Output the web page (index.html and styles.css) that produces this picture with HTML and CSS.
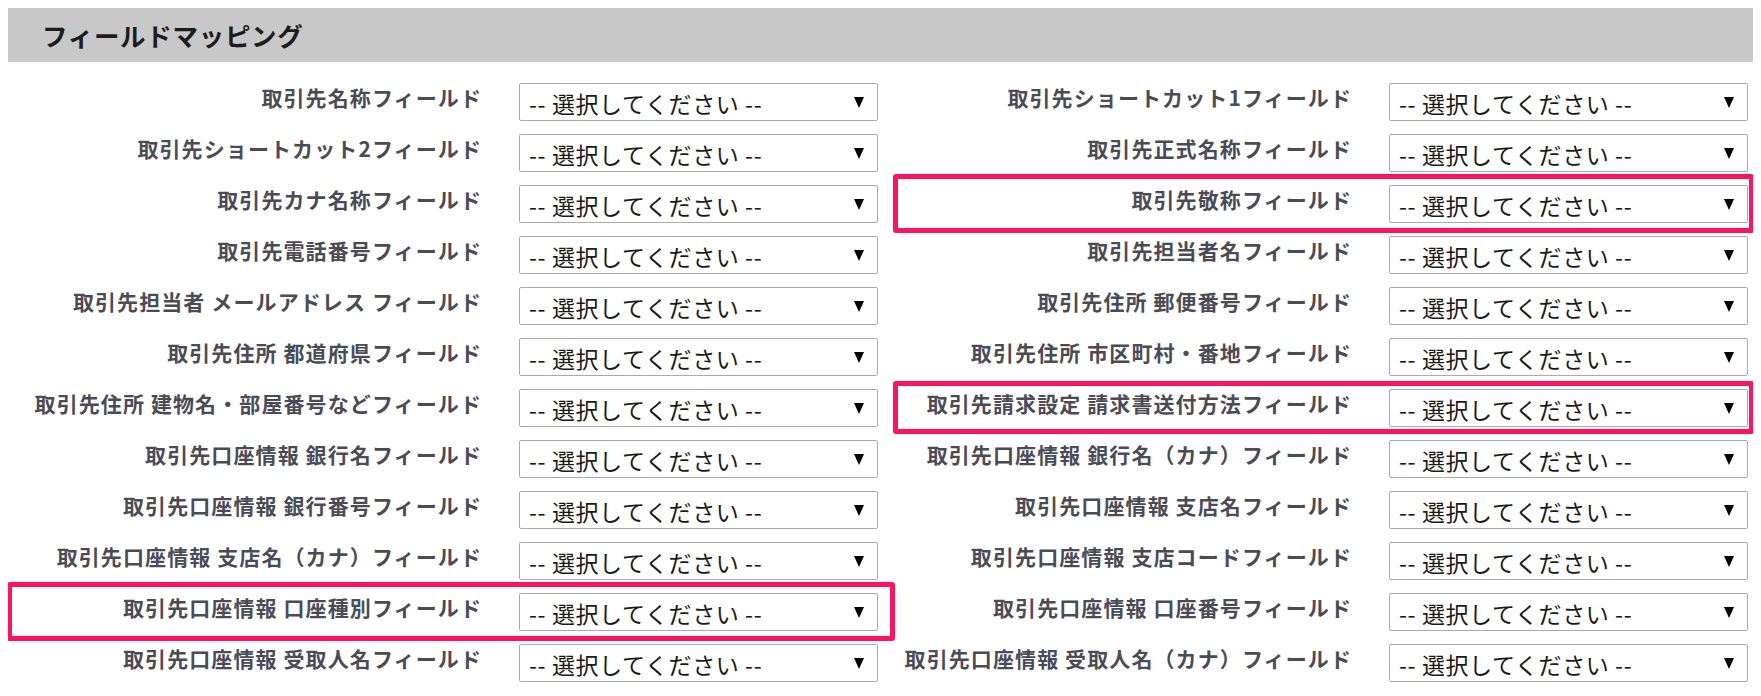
FILE: index.html
```html
<!DOCTYPE html>
<html lang="ja">
<head>
<meta charset="utf-8">
<title>フィールドマッピング</title>
<link rel="stylesheet" href="styles.css">
</head>
<body>
<section class="mapping">
  <h2 class="mapping-title">フィールドマッピング</h2>
  <div class="mapping-grid">
    <div class="field"><label class="field-label">取引先名称フィールド</label><div class="picker"><select class="picker-select"><option>-- 選択してください --</option></select></div></div>
    <div class="field"><label class="field-label">取引先ショートカット1フィールド</label><div class="picker"><select class="picker-select"><option>-- 選択してください --</option></select></div></div>

    <div class="field"><label class="field-label">取引先ショートカット2フィールド</label><div class="picker"><select class="picker-select"><option>-- 選択してください --</option></select></div></div>
    <div class="field"><label class="field-label">取引先正式名称フィールド</label><div class="picker"><select class="picker-select"><option>-- 選択してください --</option></select></div></div>

    <div class="field"><label class="field-label">取引先カナ名称フィールド</label><div class="picker"><select class="picker-select"><option>-- 選択してください --</option></select></div></div>
    <div class="field hl hl-right"><label class="field-label">取引先敬称フィールド</label><div class="picker"><select class="picker-select"><option>-- 選択してください --</option></select></div></div>

    <div class="field"><label class="field-label">取引先電話番号フィールド</label><div class="picker"><select class="picker-select"><option>-- 選択してください --</option></select></div></div>
    <div class="field"><label class="field-label">取引先担当者名フィールド</label><div class="picker"><select class="picker-select"><option>-- 選択してください --</option></select></div></div>

    <div class="field"><label class="field-label">取引先担当者 メールアドレス フィールド</label><div class="picker"><select class="picker-select"><option>-- 選択してください --</option></select></div></div>
    <div class="field"><label class="field-label">取引先住所 郵便番号フィールド</label><div class="picker"><select class="picker-select"><option>-- 選択してください --</option></select></div></div>

    <div class="field"><label class="field-label">取引先住所 都道府県フィールド</label><div class="picker"><select class="picker-select"><option>-- 選択してください --</option></select></div></div>
    <div class="field"><label class="field-label">取引先住所 市区町村・番地フィールド</label><div class="picker"><select class="picker-select"><option>-- 選択してください --</option></select></div></div>

    <div class="field"><label class="field-label">取引先住所 建物名・部屋番号などフィールド</label><div class="picker"><select class="picker-select"><option>-- 選択してください --</option></select></div></div>
    <div class="field hl hl-right hl-tight"><label class="field-label">取引先請求設定 請求書送付方法フィールド</label><div class="picker"><select class="picker-select"><option>-- 選択してください --</option></select></div></div>

    <div class="field"><label class="field-label">取引先口座情報 銀行名フィールド</label><div class="picker"><select class="picker-select"><option>-- 選択してください --</option></select></div></div>
    <div class="field"><label class="field-label">取引先口座情報 銀行名（カナ）フィールド</label><div class="picker"><select class="picker-select"><option>-- 選択してください --</option></select></div></div>

    <div class="field"><label class="field-label">取引先口座情報 銀行番号フィールド</label><div class="picker"><select class="picker-select"><option>-- 選択してください --</option></select></div></div>
    <div class="field"><label class="field-label">取引先口座情報 支店名フィールド</label><div class="picker"><select class="picker-select"><option>-- 選択してください --</option></select></div></div>

    <div class="field"><label class="field-label">取引先口座情報 支店名（カナ）フィールド</label><div class="picker"><select class="picker-select"><option>-- 選択してください --</option></select></div></div>
    <div class="field"><label class="field-label">取引先口座情報 支店コードフィールド</label><div class="picker"><select class="picker-select"><option>-- 選択してください --</option></select></div></div>

    <div class="field hl hl-left"><label class="field-label">取引先口座情報 口座種別フィールド</label><div class="picker"><select class="picker-select"><option>-- 選択してください --</option></select></div></div>
    <div class="field"><label class="field-label">取引先口座情報 口座番号フィールド</label><div class="picker"><select class="picker-select"><option>-- 選択してください --</option></select></div></div>

    <div class="field"><label class="field-label">取引先口座情報 受取人名フィールド</label><div class="picker"><select class="picker-select"><option>-- 選択してください --</option></select></div></div>
    <div class="field"><label class="field-label">取引先口座情報 受取人名（カナ）フィールド</label><div class="picker"><select class="picker-select"><option>-- 選択してください --</option></select></div></div>
  </div>
</section>
</body>
</html>
```

FILE: styles.css
```css
html, body {
  background: #ffffff;
}

body {
  margin: 8px;
  font-family: "Noto Sans CJK JP", "Noto Sans", sans-serif;
  color: #222222;
  overflow: hidden;
}

.mapping {
  width: 1740px;
}

.mapping-title {
  margin: 0 -13px 0 0;
  height: 54px;
  box-sizing: border-box;
  padding: 0 0 1px 34px;
  display: flex;
  align-items: center;
  background: #c8c8c8;
  font-size: 25.5px;
  font-weight: 700;
  letter-spacing: 0.7px;
  color: #1c1c1c;
  line-height: 1;
}

.mapping-grid {
  margin-top: 21px;
  display: grid;
  grid-template-columns: 1fr 1fr;
  row-gap: 13px;
}

.field {
  position: relative;
  display: grid;
  grid-template-columns: 1fr 359px;
  height: 38px;
}

.field-label {
  padding: 2px 37px 0 0;
  text-align: right;
  white-space: nowrap;
  font-size: 21px;
  line-height: 25px;
  font-weight: 700;
  letter-spacing: 1.1px;
  color: #4b4b57;
}

.picker {
  position: relative;
  height: 38px;
}

.picker::after {
  content: "";
  position: absolute;
  right: 14px;
  top: 14px;
  width: 0;
  height: 0;
  border-left: 5.5px solid transparent;
  border-right: 5.5px solid transparent;
  border-top: 11px solid #000000;
  pointer-events: none;
}

.picker-select {
  -webkit-appearance: none;
  appearance: none;
  display: block;
  width: 100%;
  height: 38px;
  margin: 0;
  box-sizing: border-box;
  padding: 2px 30px 0 9px;
  border: 1px solid #aaaaaa;
  border-radius: 2px;
  background: #ffffff;
  font-family: "Noto Sans CJK JP", "Noto Sans", sans-serif;
  font-size: 23px;
  letter-spacing: 0.6px;
  color: #1a1a1a;
  outline: none;
}

.hl::after {
  content: "";
  position: absolute;
  top: -11px;
  bottom: -10px;
  border: 5px solid #fe145d;
  border-radius: 3px;
  pointer-events: none;
}

.hl-left::after {
  left: -1px;
  right: -17px;
}

.hl-right::after {
  left: 15px;
  right: -6px;
}

.hl-tight::after {
  top: -8px;
  bottom: -7px;
}
```
